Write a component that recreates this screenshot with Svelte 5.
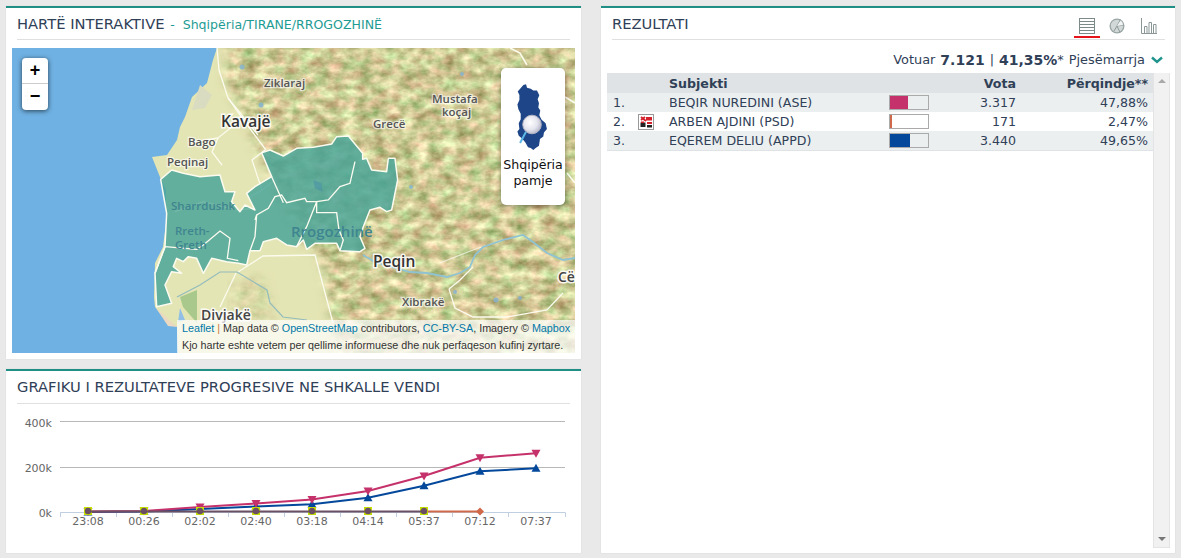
<script>
  const tl = [88, 144, 200, 256, 312, 368, 424, 480, 536];
  const labels = ['23:08','00:26','02:02','02:40','03:18','04:14','05:37','07:12','07:37'];
  const pinkY = [511.5, 511, 507, 503.5, 499.5, 491, 476, 457.7, 453.3];
  const blueY = [512, 511.5, 509, 506.5, 504.3, 497.7, 485.7, 471.3, 468.3];
  const pts = (ys) => ys.map((y, i) => `${tl[i]},${y}`).join(' ');
  const ticks = [60, 116, 172, 228, 284, 340, 396, 452, 508, 565];
  const rows = [
    { n: '1.', name: 'BEQIR NUREDINI (ASE)', v: '3.317', p: '47,88%', w: 47.88, c: '#c5316a', logo: false },
    { n: '2.', name: 'ARBEN AJDINI (PSD)', v: '171', p: '2,47%', w: 4, c: '#d0694a', logo: true },
    { n: '3.', name: 'EQEREM DELIU (APPD)', v: '3.440', p: '49,65%', w: 52, c: '#03489b', logo: false }
  ];
  const region = '62,148 95,120 130,130 180,140 240,135 255,185 285,185 275,215 300,245 315,225 345,240 320,190 345,170 395,140 365,68 390,60 430,78 470,55 520,52 575,42 590,20 625,18 668,70 668,88 680,85 695,120 740,125 745,85 765,85 773,150 755,240 740,245 720,232 690,240 670,290 660,320 675,355 660,365 600,362 590,340 525,340 500,358 490,330 470,350 440,345 410,325 370,335 360,362 330,362 320,405 295,400 260,395 215,385 190,430 170,385 145,380 130,395 110,385 100,410 125,430 95,425 75,465 95,520 50,530 45,430 75,350 80,250';
  const inner = [
    '395,140 430,218',
    '645,95 630,160 600,170 565,210 530,215 500,215 495,205 440,218 425,195 405,200 385,235 350,255 345,270',
    '350,255 345,320 330,362',
    '530,215 530,248 590,248 597,300 610,330 600,362',
    '530,215 500,290 470,350',
    '75,350 170,358 190,345 240,303 270,325 262,385 295,392',
    '45,430 75,350'
  ];
</script>

<div class="page">
  <div class="left">
    <section class="panel map-panel">
      <h2 class="title">HARTË INTERAKTIVE <span class="crumb"><span class="dash">-</span> Shqipëria/TIRANE/RROGOZHINË</span></h2>
      <div class="map">
        <svg class="map-svg" viewBox="12 48 563 305" width="563" height="305">
          <defs>
            <filter id="hills" x="0" y="0" width="100%" height="100%" color-interpolation-filters="sRGB">
              <feTurbulence type="fractalNoise" baseFrequency="0.07 0.1" numOctaves="4" seed="11" />
              <feColorMatrix type="matrix" values="0.6 -0.2 0 0 0.6  0.55 0.15 0 0 0.44  0.6 0 0 0 0.28  0 0 0 0 1" />
            </filter>
            <filter id="soft" x="-10%" y="-10%" width="120%" height="120%">
              <feGaussianBlur stdDeviation="6" />
            </filter>
            <mask id="hillmask">
              <polygon fill="#fff" filter="url(#soft)" points="226,40 590,40 590,370 340,370 322,258 300,240 262,160 240,110 226,80" />
              <polygon fill="#777" filter="url(#soft)" points="232,285 262,275 275,320 232,325" />
            </mask>
          </defs>
          <rect x="12" y="48" width="563" height="305" fill="#6fb1e3" />
          <polygon fill="#e4e5b4" points="217,48 213,60 207,83 192,97 185,117 180,127 177,140 167,155 152,157 160,177 166,190 166,223 163,247 155,263 154,297 155,307 163,317 177,327 178,353 600,353 600,48" />
          <polygon fill="#d9dcc0" points="200,85 212,95 205,108 192,110" />
          <rect x="12" y="48" width="563" height="305" filter="url(#hills)" mask="url(#hillmask)" />
          <polygon fill="#a9c88c" points="180,297 197,290 197,323 183,307" />
          <polygon fill="#92bfe6" points="180,308 185,320 178,322" />
          <polygon fill="#ead8c0" points="156,308 177,327 168,326" />
          <g fill="none" stroke="#fbfbee" stroke-width="1.3">
            <path d="M217,48 L219,70 L228,98 L245,122 L266,150" />
            <path d="M228,98 L258,135" />
            <path d="M188,143 L218,138 L238,122" />
            <path d="M218,138 L212,152 L222,165" />
            <path d="M265,150 L252,160 L262,190 L250,197" />
            <path d="M262,190 L275,180" />
            <path d="M238,272 L263,256 L315,255 L333,323" />
            <path d="M236,273 L220,307" />
            <path d="M449,289 L460,280 L473,267" />
            <path d="M449,289 L455,308 L473,317 L507,317 L547,310 L563,293" />
            <path d="M440,263 L473,250 L503,240" opacity=".7" />
            <path d="M510,48 L520,53 L527,65 M565,97 L575,103 M567,173 L575,183" stroke-width="1.6" />
          </g>
          <g fill="none">
            <path d="M363,255 L375,262 L395,268 L410,272 L427,273 L447,277 L460,273 L470,267 L475,255 L483,247 L503,240 L523,235 L533,242 L547,253 L563,260 L575,258" stroke="#8fc3d2" stroke-width="1.8" />
            <path d="M177,297 L200,285 L220,272 L237,272 L267,290 L270,303 L283,317 L307,320" stroke="#93bcbc" stroke-width="1.2" />
          </g>
          <g fill="#7fb2d6" opacity=".75">
            <circle cx="242" cy="67" r="2.5" /><circle cx="261" cy="105" r="2.5" /><circle cx="462" cy="74" r="2" />
            <circle cx="496" cy="300" r="2.5" /><circle cx="520" cy="298" r="2" /><circle cx="455" cy="292" r="2" />
            <circle cx="411" cy="187" r="2" />
          </g>
          <text class="ml" x="264" y="87">Ziklaraj</text>
          <text class="ml" x="373" y="128">Grecë</text>
          <text class="ml" x="432" y="103">Mustafa</text>
          <text class="ml" x="442" y="116">koçaj</text>
          <text class="ml" x="188" y="146">Bago</text>
          <text class="ml" x="167" y="166">Peqinaj</text>
          <text class="mb" x="221" y="127">Kavajë</text>
          <text class="ml" x="402" y="306">Xibrakë</text>
          <text class="mb" x="373" y="267">Peqin</text>
          <text class="mb small" x="558" y="282">Cë</text>
          <text class="mb small" x="201" y="320">Divjakë</text>
          <g transform="translate(140 130) scale(0.3333)">
            <polygon points={region} fill="#4aa598" fill-opacity=".84" stroke="#fbfbf0" stroke-width="4.5" stroke-linejoin="round" />
            {#each inner as line}
              <polyline points={line} fill="none" stroke="#fbfbf0" stroke-width="4" />
            {/each}
            <polyline points="105,245 190,215 290,240 345,235" fill="none" stroke="#fff" stroke-opacity=".15" stroke-width="3" />
            <polygon points="520,150 545,160 548,185 525,175" fill="#4a93a8" opacity=".6" />
          </g>
          <text class="mt" x="171" y="210">Sharrdushk</text>
          <text class="mt" x="175" y="235">Rreth-</text>
          <text class="mt" x="175" y="249">Greth</text>
          <text class="mt large" x="291" y="237">Rrogozhinë</text>
        </svg>

        <div class="zoom">
          <span class="zbtn">+</span>
          <span class="zbtn">−</span>
        </div>

        <div class="card">
          <svg viewBox="303 120 192 220" width="64" height="73">
            <defs>
              <radialGradient id="lens" cx="40%" cy="40%" r="65%">
                <stop offset="0" stop-color="#fff" />
                <stop offset=".6" stop-color="#e4e4ee" />
                <stop offset="1" stop-color="#b4b4c6" />
              </radialGradient>
            </defs>
            <path d="M370,135 L378,133 381,143 392,146 400,152 411,152 418,166 413,178 417,190 415,203 421,212 418,226 425,240 437,250 441,268 432,278 430,290 420,298 417,318 406,326 400,331 392,325 384,323 376,308 366,296 356,288 352,275 358,268 356,250 362,238 362,222 355,208 352,194 358,180 358,165 353,155 Z" fill="#1d4587" />
            <line x1="378" y1="276" x2="360" y2="310" stroke="#5bb7e5" stroke-width="6" />
            <circle cx="396" cy="254" r="28" fill="url(#lens)" stroke="#b5b5c5" stroke-width="3" />
          </svg>
          <div class="card-text">Shqipëria<br />pamje</div>
        </div>

        <div class="attr">
          <div><a>Leaflet</a> <span class="sep">|</span> Map data © <a>OpenStreetMap</a> contributors, <a>CC-BY-SA</a>, Imagery © <a>Mapbox</a></div>
          <div>Kjo harte eshte vetem per qellime informuese dhe nuk perfaqeson kufinj zyrtare.</div>
        </div>
      </div>
    </section>

    <section class="panel chart-panel">
      <h2 class="title">GRAFIKU I REZULTATEVE PROGRESIVE NE SHKALLE VENDI</h2>
      <svg class="chart" viewBox="6 404 575 149" width="575" height="149">
        <line class="grid" x1="60" x2="565" y1="421.5" y2="421.5" />
        <line class="grid" x1="60" x2="565" y1="467.5" y2="467.5" />
        <text class="yl" x="52" y="427">400k</text>
        <text class="yl" x="52" y="472">200k</text>
        <text class="yl" x="52" y="517">0k</text>
        <line class="axis" x1="60" x2="565.5" y1="512.5" y2="512.5" />
        {#each ticks as t}
          <line class="axis" x1={t + 0.5} x2={t + 0.5} y1="512.5" y2="517" />
        {/each}
        {#each labels as l, i}
          <text class="xl" x={tl[i]} y="525">{l}</text>
        {/each}
        <line x1="424" x2="480" y1="511.5" y2="511.5" stroke="#d0694a" stroke-width="2" />
        <polygon points="480,507.5 484,511.5 480,515.5 476,511.5" fill="#d0694a" />
        <polyline points={pts(blueY)} fill="none" stroke="#03489b" stroke-width="2" />
        <polyline points={pts(pinkY)} fill="none" stroke="#c5316a" stroke-width="2" />
        {#each blueY as y, i}
          <polygon points="{tl[i]},{y - 4.5} {tl[i] + 4.5},{y + 3.5} {tl[i] - 4.5},{y + 3.5}" fill="#03489b" />
        {/each}
        {#each pinkY as y, i}
          <polygon points="{tl[i]},{y + 4.5} {tl[i] + 4.5},{y - 3.5} {tl[i] - 4.5},{y - 3.5}" fill="#c5316a" />
        {/each}
        {#each tl.slice(0, 7) as x}
          <rect x={x - 4} y="507" width="8" height="8" fill="#c3e000" />
        {/each}
        <line x1="88" x2="424" y1="511.5" y2="511.5" stroke="#6b4f62" stroke-width="2" />
        {#each tl.slice(0, 7) as x}
          <circle cx={x} cy="511" r="3.2" fill="#6b4f62" />
        {/each}
      </svg>
    </section>
  </div>

  <section class="panel result-panel">
    <div class="title res-title">
      <h2>REZULTATI</h2>
      <div class="tabs">
        <span class="tab active">
          <svg viewBox="0 0 16 16" width="16" height="16" fill="none" stroke="#7d8a8a">
            <rect x="0.5" y="0.5" width="15" height="15" />
            <path d="M1 3.5H15M1 6.5H15M1 9.5H15M1 12.5H15" stroke-width="1.2" />
          </svg>
        </span>
        <span class="tab pie">
          <svg viewBox="0 0 16 16" width="16" height="16">
            <circle cx="8" cy="8" r="7.5" fill="#9aa5a5" />
            <circle cx="8" cy="8" r="6.2" fill="#d2d8d8" />
            <path d="M8 8 L11.5 1.5 M8 8 L15 7 M8 8 L11 14.5 M8 8 L5 13" fill="none" stroke="#8f9a9a" stroke-width="1" />
            <path d="M8 8 L11.5 2.5 A6.2 6.2 0 0 1 14 7 Z" fill="#f2f4f4" />
          </svg>
        </span>
        <span class="tab">
          <svg viewBox="0 0 16 16" width="16" height="16" fill="none" stroke="#8b9696">
            <path d="M0.5 0 V15.5 H16" />
            <path d="M3.5 15 V8.5 H6 V15 M8 15 V4.5 H10.5 V15 M12.5 15 V6.5 H15 V15" />
          </svg>
        </span>
      </div>
    </div>
    <div class="votes">
      <span>Votuar</span><b>7.121</b><span>|</span><b>41,35%</b><span class="ast">*</span><span>Pjesëmarrja</span>
      <svg viewBox="0 0 12 8" width="12" height="8" class="chev"><path d="M1 1.5 L6 6 L11 1.5" fill="none" stroke="#1f958d" stroke-width="2.4" /></svg>
    </div>
    <div class="res-body">
      <div class="table">
        <div class="row head">
          <span class="c-n"></span><span class="c-l"></span><span class="c-name">Subjekti</span><span class="c-bar"></span><span class="c-v">Vota</span><span class="c-p">Përqindje**</span>
        </div>
        {#each rows as r, i}
          <div class="row" class:alt={i % 2 === 0}>
            <span class="c-n">{r.n}</span>
            <span class="c-l">
              {#if r.logo}
                <svg viewBox="0 0 16 16" width="16" height="16">
                  <rect x="0.5" y="0.5" width="15" height="15" fill="#fff" stroke="#999" />
                  <path d="M3 3 L8 7 M7 3 L3 6" stroke="#d3202a" stroke-width="1.8" />
                  <rect x="8" y="3" width="6" height="3.5" fill="#d3202a" />
                  <rect x="2.5" y="8.5" width="5" height="4.5" fill="#222" />
                  <rect x="3" y="7.5" width="3" height="1.5" fill="#d3202a" />
                  <rect x="9" y="8" width="5" height="2" fill="#d3202a" />
                  <rect x="9" y="11" width="5" height="2.5" fill="#222" />
                </svg>
              {/if}
            </span>
            <span class="c-name">{r.name}</span>
            <span class="c-bar"><span class="bar"><span class="fill" style="width:{r.w}%;background:{r.c}"></span></span></span>
            <span class="c-v">{r.v}</span>
            <span class="c-p">{r.p}</span>
          </div>
        {/each}
      </div>
      <div class="scroll">
        <span class="arrow up"></span>
        <span class="arrow down"></span>
      </div>
    </div>
  </section>
</div>

<style>
  :global(body) {
    margin: 0;
    background: #e9e9e9;
    overflow: hidden;
  }
  .page {
    display: grid;
    grid-template-columns: 575px 574px;
    column-gap: 20px;
    padding: 6px 6px 5px 6px;
    height: 547px;
    font-family: "DejaVu Sans", Verdana, sans-serif;
    color: #2f4057;
  }
  .left {
    display: flex;
    flex-direction: column;
    gap: 10px;
  }
  .panel {
    background: #fff;
    border-top: 2px solid #1f8f86;
    box-sizing: border-box;
    box-shadow: 0 0 1px #cfcfcf;
  }
  .map-panel {
    height: 353px;
    padding: 0 6px;
  }
  .chart-panel {
    height: 184px;
  }
  .title {
    margin: 0 5px;
    height: 32px;
    box-sizing: border-box;
    padding-top: 7px;
    border-bottom: 1px solid #e0e0e0;
    font-size: 14.7px;
    line-height: 17px;
    font-weight: 400;
    color: #2f4057;
    white-space: nowrap;
  }
  .chart-panel .title {
    margin: 0 11px;
    height: 33px;
    padding-top: 7px;
  }
  .crumb {
    font-size: 12.55px;
    color: #1e9c94;
    margin-left: 1px;
  }
  .dash {
    margin-right: 4px;
  }
  .map {
    position: relative;
    width: 563px;
    height: 305px;
    margin-top: 8px;
    overflow: hidden;
  }
  .map-svg {
    display: block;
  }
  .ml, .mb, .mt {
    font-family: "Open Sans", sans-serif;
    paint-order: stroke;
  }
  .ml {
    font-size: 11.5px;
    font-weight: 600;
    fill: #555;
    stroke: #fff;
    stroke-opacity: .6;
    stroke-width: 2.5px;
  }
  .mb {
    font-size: 15.5px;
    font-weight: 600;
    fill: #333;
    stroke: #fff;
    stroke-width: 3px;
    stroke-opacity: .85;
  }
  .mb.small {
    font-size: 14px;
    fill: #444;
  }
  .mt {
    font-size: 11.5px;
    font-weight: 600;
    fill: #3f8590;
  }
  .mt.large {
    font-size: 15px;
  }
  .zoom {
    position: absolute;
    left: 10px;
    top: 10px;
    width: 26px;
    height: 52px;
    background: #fff;
    border-radius: 4px;
    box-shadow: 0 1px 5px rgba(0, 0, 0, .65);
    display: flex;
    flex-direction: column;
  }
  .zbtn {
    height: 26px;
    box-sizing: border-box;
    text-align: center;
    font: 700 18px/25px "Liberation Sans", sans-serif;
    color: #000;
  }
  .zbtn:first-child {
    border-bottom: 1px solid #ccc;
  }
  .card {
    position: absolute;
    left: 489px;
    top: 20px;
    width: 64px;
    height: 137px;
    background: #fff;
    border-radius: 5px;
    padding-top: 12px;
    box-sizing: border-box;
    box-shadow: 0 1px 5px rgba(0, 0, 0, .35);
    text-align: center;
  }
  .card svg {
    display: block;
  }
  .card-text {
    margin-top: 4px;
    font-size: 12.6px;
    line-height: 15.5px;
    color: #111;
  }
  .attr {
    position: absolute;
    left: 165px;
    right: 0;
    bottom: 0;
    height: 33px;
    box-sizing: border-box;
    padding: 0 0 0 5px;
    background: rgba(255, 255, 255, .72);
    font: 10.75px/17px "Liberation Sans", sans-serif;
    color: #333;
    white-space: nowrap;
  }
  .attr a {
    color: #0078a8;
  }
  .sep {
    color: #c8803c;
  }
  .chart {
    display: block;
    font-family: "DejaVu Sans", sans-serif;
  }
  .grid {
    stroke: #b8b8b8;
    stroke-width: 1;
  }
  .axis {
    stroke: #c0d0e0;
    stroke-width: 1;
  }
  .yl, .xl {
    font-size: 11px;
    fill: #666;
  }
  .yl {
    text-anchor: end;
  }
  .xl {
    text-anchor: middle;
  }
  .result-panel {
    display: flex;
    flex-direction: column;
    padding-right: 5px;
  }
  .res-title {
    display: flex;
    justify-content: space-between;
    margin: 0 5px 0 11px;
  }
  .res-title h2 {
    margin: 0;
    font: inherit;
    color: inherit;
  }
  .tabs {
    display: flex;
    margin-top: 3px;
    margin-right: 8px;
  }
  .tab {
    width: 16px;
    height: 18px;
    margin-left: 16px;
    position: relative;
  }
  .tab.pie {
    margin-left: 14px;
  }
  .tab svg {
    display: block;
  }
  .tab.active::after {
    content: "";
    position: absolute;
    left: -5px;
    right: -5px;
    top: 18px;
    height: 2px;
    background: #e8141c;
  }
  .votes {
    height: 33px;
    box-sizing: border-box;
    padding: 6px 7px 0 0;
    display: flex;
    align-items: center;
    justify-content: flex-end;
    gap: 5px;
    font-size: 12.9px;
    white-space: pre;
  }
  .votes b {
    font-size: 14px;
  }
  .votes .ast {
    margin-left: -5px;
  }
  .chev {
    margin-left: 1px;
  }
  .res-body {
    flex: 1;
    display: flex;
    padding-left: 6px;
    padding-bottom: 5px;
  }
  .table {
    flex: 1;
    font-size: 12.6px;
  }
  .scroll {
    width: 17px;
    background: #f1f1f1;
    border: 1px solid #e4e4e4;
    border-width: 0 1px 1px;
    position: relative;
    display: flex;
    flex-direction: column;
    justify-content: space-between;
    align-items: center;
    padding: 6px 0;
    box-sizing: border-box;
  }
  .arrow {
    width: 0;
    height: 0;
    border-left: 4px solid transparent;
    border-right: 4px solid transparent;
  }
  .up {
    border-bottom: 4px solid #a8a8a8;
  }
  .down {
    border-top: 4px solid #777;
  }
  .row {
    display: flex;
    align-items: center;
    height: 19px;
    padding-left: 6px;
    padding-right: 5px;
  }
  .row:last-child {
    border-bottom: 1px solid #dfe3e5;
  }
  .row.alt {
    background: #ebeff0;
  }
  .row.head {
    height: 20px;
    background: #dfe3e5;
    font-weight: 700;
  }
  .c-n {
    width: 25px;
  }
  .c-l {
    width: 31px;
    height: 16px;
  }
  .c-l svg {
    display: block;
  }
  .c-name {
    width: 220px;
  }
  .c-bar {
    width: 40px;
  }
  .bar {
    display: block;
    box-sizing: border-box;
    width: 40px;
    height: 15px;
    border: 1px solid #aaa;
  }
  .fill {
    display: block;
    height: 100%;
  }
  .c-v {
    width: 87px;
    text-align: right;
  }
  .c-p {
    width: 132px;
    text-align: right;
  }
</style>
